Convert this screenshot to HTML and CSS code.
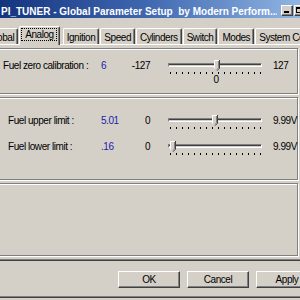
FILE: index.html
```html
<!DOCTYPE html>
<html>
<head>
<meta charset="utf-8">
<link rel="stylesheet" href="styles.css">
</head>
<body>
<div class="window">
  <div class="titlebar">
    <span class="title">PI_TUNER - Global Parameter Setup&nbsp; by Modern Perform...</span>
    <div class="caption">
      <span class="cbtn cmin"><span class="glyph-min"></span></span>
      <span class="cbtn cmax"><span class="glyph-max"></span></span>
      <span class="cbtn cclose"></span>
    </div>
  </div>
  <div class="tabs">
    <div class="tab">Global</div>
    <div class="tab active"><span class="focus">Analog</span></div>
    <div class="tab">Ignition</div>
    <div class="tab">Speed</div>
    <div class="tab">Cylinders</div>
    <div class="tab">Switch</div>
    <div class="tab">Modes</div>
    <div class="tab">System Config</div>
  </div>
  <div class="pane">
    <div class="group g1">
      <div class="row">
        <span class="label">Fuel zero calibration :</span>
        <span class="value">6</span>
        <span class="min">-127</span>
        <div class="slider">
          <div class="track"><span class="thumb" style="--v:0.524"><svg width="6" height="11" viewBox="0 0 6 11"><path d="M0 0H6V8L3 11L0 8Z" fill="#d4d0c8"/><path d="M0.5 8.5V0.5H5" fill="none" stroke="#fff"/><path d="M5.5 0V8.2L3 10.7" fill="none" stroke="#404040"/><path d="M4.5 1V7.8L3 9.3" fill="none" stroke="#808080"/></svg></span></div>
          <div class="ticks"></div>
          <div class="mid-label">0</div>
        </div>
        <span class="max">127</span>
      </div>
    </div>
    <div class="group g2">
      <div class="row">
        <span class="label">Fuel upper limit :</span>
        <span class="value">5.01</span>
        <span class="min">0</span>
        <div class="slider">
          <div class="track"><span class="thumb" style="--v:0.502"><svg width="6" height="11" viewBox="0 0 6 11"><path d="M0 0H6V8L3 11L0 8Z" fill="#d4d0c8"/><path d="M0.5 8.5V0.5H5" fill="none" stroke="#fff"/><path d="M5.5 0V8.2L3 10.7" fill="none" stroke="#404040"/><path d="M4.5 1V7.8L3 9.3" fill="none" stroke="#808080"/></svg></span></div>
          <div class="ticks"></div>
        </div>
        <span class="max">9.99V</span>
      </div>
      <div class="row">
        <span class="label">Fuel lower limit :</span>
        <span class="value">.16</span>
        <span class="min">0</span>
        <div class="slider">
          <div class="track"><span class="thumb" style="--v:0.016"><svg width="6" height="11" viewBox="0 0 6 11"><path d="M0 0H6V8L3 11L0 8Z" fill="#d4d0c8"/><path d="M0.5 8.5V0.5H5" fill="none" stroke="#fff"/><path d="M5.5 0V8.2L3 10.7" fill="none" stroke="#404040"/><path d="M4.5 1V7.8L3 9.3" fill="none" stroke="#808080"/></svg></span></div>
          <div class="ticks"></div>
        </div>
        <span class="max">9.99V</span>
      </div>
    </div>
    <div class="group g3"></div>
  </div>
  <div class="buttons">
    <div class="btn">OK</div>
    <div class="btn">Cancel</div>
    <div class="btn">Apply</div>
  </div>
</div>
</body>
</html>
```
FILE: styles.css
```css
* { box-sizing: border-box; }
html, body { margin: 0; padding: 0; }
body {
  width: 300px;
  height: 300px;
  overflow: hidden;
  background: #d4d0c8;
  font-family: "Liberation Sans", Arial, sans-serif;
  font-size: 10px;
  letter-spacing: -0.45px;
  color: #000;
}
.window {
  width: 340px;
  height: 298px;
  margin-left: -6px;
  background: #d4d0c8;
  border-bottom: 1px solid #404040;
  box-shadow: inset 0 -1px #808080;
}
.titlebar {
  height: 18px;
  display: flex;
  align-items: flex-start;
  background: linear-gradient(to right, #12327c 0%, #3f68b0 45%, #a3c6ee 100%);
}
.title {
  flex: 1;
  min-width: 0;
  overflow: hidden;
  white-space: nowrap;
  padding: 5px 0 0 7px;
  line-height: 14px;
  font-weight: bold;
  letter-spacing: 0;
  color: #fff;
}
.caption {
  display: flex;
  flex: none;
  margin: 5px 14px 0 4px;
}
.cbtn {
  position: relative;
  width: 12px;
  height: 11px;
  background: #d4d0c8;
  border: 1px solid;
  border-color: #fff #404040 #404040 #fff;
  box-shadow: inset -1px -1px #808080;
}
.cmax { margin-left: 1px; }
.cclose { margin-left: 2px; }
.glyph-min {
  position: absolute;
  left: 2px;
  bottom: 2px;
  width: 5px;
  height: 2px;
  background: #000;
}
.glyph-max {
  position: absolute;
  left: 1px;
  top: 1px;
  width: 7px;
  height: 6px;
  border: 1px solid #000;
  border-top-width: 2px;
}
.tabs {
  height: 26px;
  display: flex;
  align-items: flex-end;
  margin-left: -10px;
  white-space: nowrap;
}
.tab {
  flex: none;
  height: 16px;
  padding: 2px 3px 0;
  line-height: 13px;
  margin-right: 1px;
  border-top: 1px solid #fff;
  border-left: 1px solid #fff;
  border-right: 1px solid #404040;
  border-radius: 2px 2px 0 0;
  box-shadow: inset -1px 0 #808080;
  background: #d4d0c8;
}
.tab.active {
  position: relative;
  z-index: 1;
  height: 19px;
  margin: 0 3px -1px 0;
  padding: 1px 2px 0 1px;
}
.focus {
  display: inline-block;
  padding: 0 2px 0 3px;
  line-height: 11px;
  border: 1px dotted #000;
}
.pane {
  border-top: 1px solid #fff;
  border-bottom: 1px solid #404040;
  box-shadow: inset 0 -1px #808080;
  padding: 3px 0 4px 3px;
}
.group {
  width: 301px;
  border: 1px solid #808080;
  box-shadow: inset 1px 1px #fff, 1px 1px #fff;
}
.g1 { height: 46px; padding-top: 10px; margin-bottom: 3px; }
.g1 .label { padding-left: 5px; }
.g2 { height: 83px; padding-top: 16px; margin-bottom: 3px; }
.g2 .label { padding-left: 10px; }
.g3 { height: 73px; }
.row {
  display: grid;
  grid-template-columns: 103px 29px 21px 115px auto;
  align-items: start;
  line-height: 14px;
  height: 26px;
  white-space: nowrap;
}
.value { color: #1c1caa; }
.min { text-align: right; padding-right: 1px; }
.max { padding-left: 7px; }
.slider {
  justify-self: end;
  width: 100px;
}
.track {
  position: relative;
  margin: 4px 4px 0 2px;
  height: 4px;
  border: 1px solid;
  border-color: #808080 #fff #fff #808080;
  box-shadow: inset 0 1px #404040;
}
.thumb {
  position: absolute;
  top: -4px;
  left: calc(var(--v) * (100% - 6px));
  width: 6px;
  height: 11px;
  line-height: 0;
}
.ticks {
  margin: 5px 0 0 4px;
  width: 91px;
  height: 2px;
  background: repeating-linear-gradient(to right, #000 0 1px, transparent 1px 6px);
}
.mid-label {
  width: 6px;
  margin-left: 47px;
  text-align: center;
  line-height: 12px;
}
.buttons {
  display: flex;
  gap: 7px;
  margin-top: 10px;
  padding-left: 124px;
}
.btn {
  flex: none;
  width: 62px;
  height: 17px;
  line-height: 15px;
  text-align: center;
  border: 1px solid;
  border-color: #fff #404040 #404040 #fff;
  box-shadow: inset -1px -1px #808080;
}
```
